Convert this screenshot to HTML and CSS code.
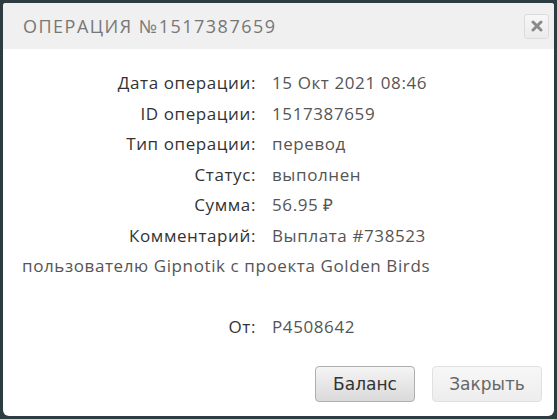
FILE: index.html
```html
<!DOCTYPE html>
<html>
<head>
<meta charset="utf-8">
<link rel="stylesheet" href="styles.css">
</head>
<body>
<div class="dialog">
  <div class="header">
    <div class="title">Операция №1517387659</div>
    <button class="close" aria-label="close">
      <svg width="12" height="12" viewBox="0 0 12 12"><path d="M2 2 L10 10 M10 2 L2 10" stroke="#8a8a8a" stroke-width="3" stroke-linecap="round"/></svg>
    </button>
  </div>
  <div class="content">
    <div class="row"><span class="label">Дата операции:</span><span class="value">15 Окт 2021 08:46</span></div>
    <div class="row"><span class="label">ID операции:</span><span class="value">1517387659</span></div>
    <div class="row"><span class="label">Тип операции:</span><span class="value">перевод</span></div>
    <div class="row"><span class="label">Статус:</span><span class="value">выполнен</span></div>
    <div class="row"><span class="label">Сумма:</span><span class="value">56.95 ₽</span></div>
    <div class="row"><span class="label">Комментарий:</span><span class="value">Выплата #738523 пользователю Gipnotik с проекта Golden Birds</span></div>
    <div class="row empty"></div>
    <div class="row"><span class="label">От:</span><span class="value">P4508642</span></div>
  </div>
  <div class="buttons">
    <button class="btn primary">Баланс</button>
    <button class="btn secondary">Закрыть</button>
  </div>
</div>
</body>
</html>
```
FILE: styles.css
```css
html, body {
  margin: 0;
  padding: 0;
}
body {
  background: #2c3c41;
  padding: 3px;
  width: 557px;
  height: 419px;
  box-sizing: border-box;
}
.dialog {
  background: #fff;
  height: 413px;
  border-radius: 3px 3px 6px 6px;
  overflow: hidden;
  display: flex;
  flex-direction: column;
}
.header {
  background: #f0f0f0;
  height: 46px;
  display: flex;
  align-items: center;
  justify-content: space-between;
  padding: 0 5px 0 20px;
}
.title {
  font-family: "Open Sans", sans-serif;
  font-size: 18px;
  letter-spacing: 1.5px;
  text-transform: uppercase;
  color: #777;
}
.close {
  width: 25px;
  height: 25px;
  border: 1px solid #dcdcdc;
  border-radius: 3px;
  background: linear-gradient(#f7f7f7, #ebebeb);
  padding: 0;
  display: flex;
  align-items: center;
  justify-content: center;
}
.content {
  padding: 19px 60px 0 19px;
  font-family: "Open Sans", sans-serif;
  font-size: 17px;
  letter-spacing: 0.6px;
  line-height: 30.5px;
  flex: 1;
}
.row {
  color: #555;
}
.empty {
  height: 30px;
}
.label {
  display: inline-block;
  width: 234px;
  text-align: right;
  color: #333;
  margin-right: 16px;
}
.buttons {
  display: flex;
  justify-content: flex-end;
  gap: 17px;
  padding: 0 12px 14px 0;
}
.btn {
  font-family: "DejaVu Sans", sans-serif;
  font-size: 17px;
  height: 36px;
  border-radius: 4px;
  padding: 0;
}
.primary {
  width: 100px;
  border: 1px solid #aeaeae;
  background: linear-gradient(#f5f5f5, #e4e4e4 60%, #dadada);
  color: #333;
}
.secondary {
  width: 110px;
  border: 1px solid #e0e0e0;
  background: linear-gradient(#f7f7f7, #ededed);
  color: #666;
}
```
